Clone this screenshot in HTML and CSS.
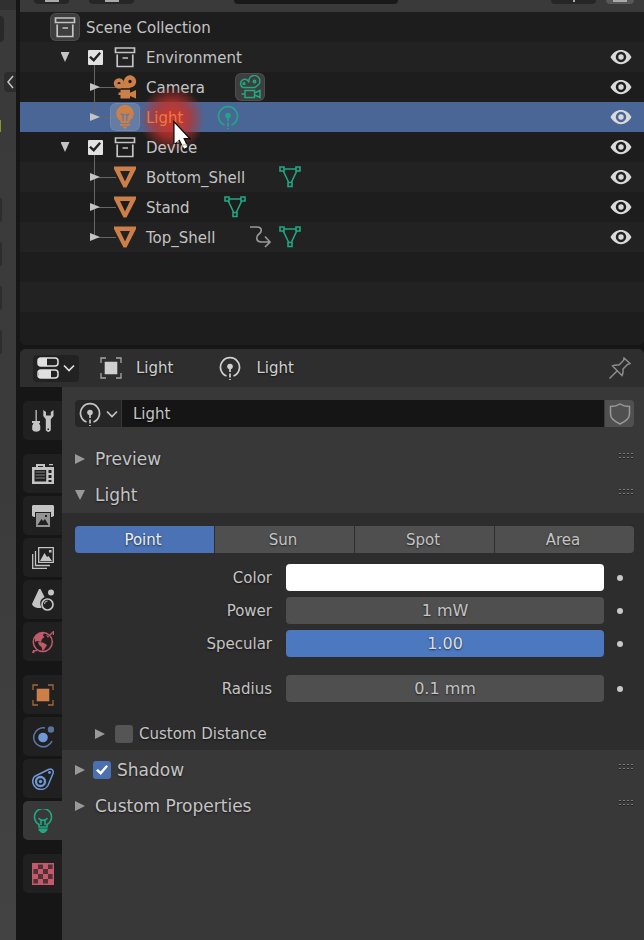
FILE: index.html
```html
<!DOCTYPE html>
<html lang="en">
<head>
<meta charset="utf-8">
<title>Outliner and Light Properties</title>
<link rel="stylesheet" href="styles.css">
</head>
<body>
<svg class="defs" aria-hidden="true">
  <symbol id="archive" viewBox="0 0 22 22"><path d="M1.500 2h19v4.500h-19zM3.200 8.500v12h15.600v-12M8.500 12h5.500" fill="none" stroke="currentColor" stroke-width="1.700"/></symbol>
  <symbol id="eye" viewBox="0 0 22 22"><path fill="currentColor" fill-rule="evenodd" d="M.5 11C5.500 1.500 16.500 1.500 21.500 11 16.500 20.500 5.500 20.500.5 11zM11 5.800a5.200 5.200 0 1 0 .01 0z"/><circle cx="11" cy="11" r="2.700" fill="currentColor"/></symbol>
  <symbol id="camera" viewBox="0 0 24 24"><path fill="currentColor" d="M5 9h12v4.200H5z"/><path fill="currentColor" fill-rule="evenodd" d="M6 3.200a5.200 5.200 0 1 0 .01 0zM6 7a1.500 1.500 0 1 1-.01 0zM17 .3a6.200 6.200 0 1 0 .01 0zM17 4.800a1.700 1.700 0 1 1-.01 0z"/><path fill="currentColor" d="M7.500 14.800H17v3l6-2.800v8.500L17 21v2.500H7.500V20h-2v-2.500h2z"/></symbol>
  <symbol id="camera-data" viewBox="0 0 24 24"><g fill="none" stroke="currentColor" stroke-width="1.500"><path d="M5 12.500A4.300 4.300 0 1 1 11 7.500 M11 7A5.500 5.500 0 1 1 19.500 10.500 L17 12.500H5M7 15.500h9.500v7H7zM16.500 18l5.500-2.500v7L16.500 20M7 19H3.500"/><circle cx="16.500" cy="6.500" r="1.200"/><circle cx="6" cy="8.700" r=".9"/></g></symbol>
  <symbol id="lamp" viewBox="0 0 24 24"><path fill="currentColor" fill-rule="evenodd" d="M7.500 18v-2A8.700 8.700 0 1 1 16.500 16v2zM7 8l2.500 4v4H11v-4.500l-1-1.500 2 .8 2-.8-1 1.500V16h1.500v-4L17 8l-5 1.500z"/><path fill="currentColor" d="M7 19h10v1.700H7zM9 21.500h6L12 24z"/></symbol>
  <symbol id="lamp-data" viewBox="0 0 24 24"><path d="M8 18v-2.500A8.500 8.500 0 1 1 16 15.500V18zM7.500 9l2.500 2.500V16M16.500 9 14 11.500V16M9.500 10.500l2.500 1 2.500-1" fill="none" stroke="currentColor" stroke-width="1.600"/><path fill="currentColor" d="M7.500 19.500h9v1.700L13.500 24h-3l-3-2.800z"/></symbol>
  <symbol id="point" viewBox="0 0 22 24"><g fill="none" stroke="currentColor" stroke-width="1.700"><path d="M7.500 20A9.500 9.500 0 1 1 14.500 20"/><path d="M11 12v12" stroke-dasharray="4 1.500"/></g><circle cx="11" cy="10.500" r="2.800" fill="currentColor"/></symbol>
  <symbol id="mesh-obj" viewBox="0 0 22 22"><path fill="currentColor" fill-rule="evenodd" d="M0 .5h22V3l-9.500 18.500h-3L0 3zM6 5l5 10.500L16 5z"/></symbol>
  <symbol id="mesh" viewBox="0 0 22 22"><path d="M5.500 3h11M4.500 5.500l5 10.500M17.500 5.500l-5 10.500M1 1h4v4H1zM17 1h4v4h-4zM9 16.500h4v4H9z" fill="none" stroke="currentColor" stroke-width="1.600"/></symbol>
  <symbol id="modifier" viewBox="0 0 22 22"><path d="M1 1h7c5 0 5.500 4.500 2 7s-3 8 2 8h8M16 10.500l5 5.500-5 5" fill="none" stroke="currentColor" stroke-width="1.600"/></symbol>
  <symbol id="object" viewBox="0 0 22 22"><path d="M1 6V1h5M16 1h5v5M21 16v5h-5M6 21H1v-5" fill="none" stroke="currentColor" stroke-width="1.300" opacity=".75"/><path d="M4.700 4.700h12.600v12.600H4.700z" fill="currentColor"/></symbol>
  <symbol id="chevron" viewBox="0 0 12 8"><path d="M1 1.500 6 6.500l5-5" fill="none" stroke="currentColor" stroke-width="1.700"/></symbol>
  <symbol id="toggles" viewBox="0 0 22 22"><rect x="1" y="1" width="20" height="8" rx="3" fill="none" stroke="currentColor" stroke-width="1.500"/><path d="M3 1h7v8H3L1 7V3z" fill="currentColor"/><rect x="1" y="13" width="20" height="8" rx="3" fill="none" stroke="currentColor" stroke-width="1.500"/><path d="M2 13h12v8H2z" fill="currentColor"/></symbol>
  <symbol id="pin" viewBox="0 0 22 22"><path d="M.5 21.500 8 14M3.500 9C6 7.500 8.500 8 10 8l4.500-4.500L15 1l6 5.500-2.500 1L14 12c0 2 .5 4-1 6.500z" fill="none" stroke="currentColor" stroke-width="1.500"/></symbol>
  <symbol id="shield" viewBox="0 0 22 22"><path d="M11 1C8 3 5 3.500 1.500 3.500V11c0 4.500 4 7.500 9.500 10 5.500-2.500 9.500-5.500 9.500-10V3.500C17 3.500 14 3 11 1z" fill="none" stroke="currentColor" stroke-width="1.500"/></symbol>
  <symbol id="tools" viewBox="0 0 22 22"><path fill="currentColor" d="M3.500 0h1.300v11H8v2H7l1.300 3v3.500C7 22.500 1.500 22.500.2 19.500V16l1.300-3H0v-2h3.500z"/><path fill="currentColor" fill-rule="evenodd" d="M11.300 0v6l2.500 3.200v11q2.500 3.500 5 0v-11L21.500 6V0L18.800 2v3.500H14V2zM15.500 18.500h1.500v1.500h-1.500z"/></symbol>
  <symbol id="render" viewBox="0 0 22 22"><path fill="currentColor" fill-rule="evenodd" d="M0 4h4V1h9v3h9v17H0zM6 3v1h5V3zM2.500 7v11.500h11.700V7zM16.500 7v3h3V7zM16.500 12v3h3v-3zM16.500 17v2h3v-2z"/><path fill="currentColor" opacity=".6" d="M3.500 8.500h9.500v1H3.500zM3.500 11.500h9.500v1H3.500zM3.500 14.500h9.500v1H3.500z"/><path fill="currentColor" d="M17 1h4v1.300h-4z"/></symbol>
  <symbol id="output" viewBox="0 0 22 22"><path fill="currentColor" d="M1 0h20l1 1v10l-2 1h-1V7H3v5H2l-2-1V1z"/><path fill="currentColor" fill-rule="evenodd" opacity=".7" d="M4 8h14v14H4zM5.500 20h11L13 14l-2 2-1.500-2zM13 10v2h2v-2z"/></symbol>
  <symbol id="layers" viewBox="0 0 22 22"><path fill="none" stroke="currentColor" stroke-width="1.300" d="M6.700.7h14.600v14.600H6.700zM3.500 4v14.500H18M.7 7v14.300H15"/><path fill="currentColor" d="m8 14 4.500-8 2.500 4 1.500-1 3.500 5zM17 3h2.500v2.500H17z"/></symbol>
  <symbol id="scene" viewBox="0 0 22 22"><path fill="currentColor" d="M7 0h1.500l4 8c-5 3-5 6-3 11C6 19.500 1 18.500 0 15z"/><circle cx="19" cy="3.500" r="3" fill="currentColor"/><circle cx="15.500" cy="15.500" r="5.500" fill="none" stroke="currentColor" stroke-width="1.700"/><path d="M12.500 15a3 3 0 0 1 3-3" fill="none" stroke="currentColor"/></symbol>
  <symbol id="world" viewBox="0 0 22 22"><circle cx="10.800" cy="11" r="9.500" fill="none" stroke="currentColor" stroke-width="1.500"/><path fill="currentColor" d="M3 6c2-4 6-5 9-4l-1 2.500 1.500 1.500L10 8l-1 3-4-1-2 1zM6 11l5 .5 4 2.500-2.500 4-2 2-1-4L7 14zM14 4l3 1-1 2zM1 19h4v1.300H2.500V22H0z"/><path d="M18 4l3.500-3.500V4" fill="none" stroke="currentColor" stroke-width="1.300"/></symbol>
  <symbol id="physics" viewBox="0 0 22 22"><path d="M13 2A9.500 9.500 0 1 0 20 15" fill="none" stroke="currentColor" stroke-width="1.500" opacity=".75"/><circle cx="11" cy="11.500" r="4.800" fill="currentColor"/><circle cx="19" cy="3.500" r="3.200" fill="currentColor" opacity=".7"/></symbol>
  <symbol id="constraint" viewBox="0 0 22 22"><path d="m2.500 8.500 14-7c3-1.500 5.500 1 4.500 4l-5 12c-3 5.500-11 5-14 0C.3 14.500.5 11 2.500 8.500z" fill="none" stroke="currentColor" stroke-width="1.500"/><circle cx="8.500" cy="13.500" r="4.500" fill="none" stroke="currentColor" stroke-width="2.300"/><circle cx="8.500" cy="13.500" r="1.700" fill="currentColor"/><circle cx="17.500" cy="4.500" r="1.400" fill="currentColor"/></symbol>
  <symbol id="checker" viewBox="0 0 22 22"><path d="M.7.700h20.600v20.600H.7z" fill="currentColor" fill-opacity=".3" stroke="currentColor" stroke-width="1.400"/><path fill="currentColor" d="M1 1h5v5H1zM11 1h5v5h-5zM6 6h5v5H6zM16 6h5v5h-5zM1 11h5v5H1zM11 11h5v5h-5zM6 16h5v5H6zM16 16h5v5h-5z"/></symbol>
</svg>

<div class="app">
  <aside class="viewport">
    <span class="gizmo-edge"></span>
    <button class="sidebar-toggle" aria-label="Toggle sidebar"><svg viewBox="0 0 8 14"><path d="M7 1 2 7l5 6" fill="none" stroke="currentColor" stroke-width="1.500"/></svg></button>
    <span class="axis"></span>
    <span class="nav"></span><span class="nav"></span><span class="nav"></span><span class="nav"></span>
  </aside>

  <main class="editors">
    <section class="outliner">
      <header class="outliner-head">
        <button class="stub wide" aria-label="Editor type"><i></i></button>
        <button class="stub mode" aria-label="Display mode"><i></i></button>
        <input class="search" type="search" aria-label="Search">
        <button class="stub filter" aria-label="Filter"><i></i></button>
        <button class="stub add" aria-label="New collection"><i></i></button>
      </header>
      <div class="tree">
        <div class="row root"><span class="cell boxed"><svg class="i22"><use href="#archive"/></svg></span><span class="name">Scene Collection</span></div>
        <div class="row coll"><button class="cell tri open" aria-label="Collapse"></button><span class="cell stem"><input type="checkbox" class="tick light" aria-label="Environment enabled" checked></span><span class="cell"><svg class="i22"><use href="#archive"/></svg></span><span class="name">Environment</span><button class="cell eye" aria-label="Hide Environment"><svg class="i22"><use href="#eye"/></svg></button></div>
        <div class="row obj"><button class="cell tri branch" aria-label="Expand"></button><span class="cell orange"><svg class="i24"><use href="#camera"/></svg></span><span class="name">Camera</span><span class="cell data boxed"><svg class="i24"><use href="#camera-data"/></svg></span><button class="cell eye" aria-label="Hide Camera"><svg class="i22"><use href="#eye"/></svg></button></div>
        <div class="row obj selected"><button class="cell tri branch last" aria-label="Expand"></button><span class="cell orange boxed"><svg class="i24"><use href="#lamp"/></svg></span><span class="name">Light<span class="glow"></span><svg class="cursor" viewBox="0 0 20 34"><path d="M1 1v26l6-5 5 10 5-2.500L12.500 20H19z" fill="#fff" stroke="#111" stroke-width="1.500"/></svg></span><span class="cell data"><svg class="i24"><use href="#point"/></svg></span><button class="cell eye" aria-label="Hide Light"><svg class="i22"><use href="#eye"/></svg></button></div>
        <div class="row coll"><button class="cell tri open" aria-label="Collapse"></button><span class="cell stem"><input type="checkbox" class="tick light" aria-label="Device enabled" checked></span><span class="cell"><svg class="i22"><use href="#archive"/></svg></span><span class="name">Device</span><button class="cell eye" aria-label="Hide Device"><svg class="i22"><use href="#eye"/></svg></button></div>
        <div class="row obj"><button class="cell tri branch" aria-label="Expand"></button><span class="cell orange"><svg class="i22"><use href="#mesh-obj"/></svg></span><span class="name">Bottom_Shell</span><span class="cell data"><svg class="i22"><use href="#mesh"/></svg></span><button class="cell eye" aria-label="Hide Bottom_Shell"><svg class="i22"><use href="#eye"/></svg></button></div>
        <div class="row obj"><button class="cell tri branch" aria-label="Expand"></button><span class="cell orange"><svg class="i22"><use href="#mesh-obj"/></svg></span><span class="name">Stand</span><span class="cell data"><svg class="i22"><use href="#mesh"/></svg></span><button class="cell eye" aria-label="Hide Stand"><svg class="i22"><use href="#eye"/></svg></button></div>
        <div class="row obj"><button class="cell tri branch last" aria-label="Expand"></button><span class="cell orange"><svg class="i22"><use href="#mesh-obj"/></svg></span><span class="name">Top_Shell</span><span class="cell data grey"><svg class="i22"><use href="#modifier"/></svg></span><span class="cell green"><svg class="i22"><use href="#mesh"/></svg></span><button class="cell eye" aria-label="Hide Top_Shell"><svg class="i22"><use href="#eye"/></svg></button></div>
        <div class="row"></div>
        <div class="row"></div>
        <div class="row"></div>
      </div>
    </section>

    <section class="properties">
      <header class="props-head">
        <button class="editor-type" aria-label="Editor type"><svg class="i22"><use href="#toggles"/></svg><svg class="chev"><use href="#chevron"/></svg></button>
        <span class="crumb"><svg class="i22"><use href="#object"/></svg>Light</span>
        <span class="crumb"><svg class="i24"><use href="#point"/></svg>Light</span>
        <button class="pin" aria-label="Pin"><svg class="i22"><use href="#pin"/></svg></button>
      </header>
      <div class="props-body">
        <nav class="tabs">
          <button class="tab" aria-label="Tool"><svg class="i22"><use href="#tools"/></svg></button>
          <button class="tab first" aria-label="Render"><svg class="i22"><use href="#render"/></svg></button>
          <button class="tab" aria-label="Output"><svg class="i22"><use href="#output"/></svg></button>
          <button class="tab" aria-label="View Layer"><svg class="i22"><use href="#layers"/></svg></button>
          <button class="tab" aria-label="Scene"><svg class="i22"><use href="#scene"/></svg></button>
          <button class="tab red" aria-label="World"><svg class="i22"><use href="#world"/></svg></button>
          <button class="tab first orange" aria-label="Object"><svg class="i22"><use href="#object"/></svg></button>
          <button class="tab blue" aria-label="Physics"><svg class="i22"><use href="#physics"/></svg></button>
          <button class="tab blue" aria-label="Constraints"><svg class="i22"><use href="#constraint"/></svg></button>
          <button class="tab green active" aria-label="Object Data"><svg class="i24"><use href="#lamp-data"/></svg></button>
          <button class="tab first red" aria-label="Texture"><svg class="i22"><use href="#checker"/></svg></button>
        </nav>
        <div class="panels">
          <div class="datablock">
            <button class="browse" aria-label="Browse light data"><svg class="i24"><use href="#point"/></svg><svg class="chev"><use href="#chevron"/></svg></button>
            <input class="id" type="text" aria-label="Name" value="Light">
            <button class="fake" aria-label="Fake user"><svg class="i22"><use href="#shield"/></svg></button>
          </div>
          <div class="panel-head"><button class="fold" aria-label="Expand Preview"></button><h2>Preview</h2><span class="grip"></span></div>
          <div class="panel-head"><button class="fold open" aria-label="Collapse Light"></button><h2>Light</h2><span class="grip"></span></div>
          <div class="panel-body">
            <div class="types">
              <button class="on" aria-pressed="true">Point</button><button>Sun</button><button>Spot</button><button>Area</button>
            </div>
            <div class="field"><label for="color">Color</label><button id="color" class="swatch"></button><span class="dot"></span></div>
            <div class="field"><label for="power">Power</label><input id="power" type="text" value="1 mW"><span class="dot"></span></div>
            <div class="field"><label for="specular">Specular</label><input id="specular" class="full" type="text" value="1.00"><span class="dot"></span></div>
            <div class="field apart"><label for="radius">Radius</label><input id="radius" type="text" value="0.1 mm"><span class="dot"></span></div>
            <div class="subpanel"><button class="fold" aria-label="Expand Custom Distance"></button><input type="checkbox" class="tick grey" id="cd"><label for="cd">Custom Distance</label></div>
          </div>
          <div class="panel-head"><button class="fold" aria-label="Expand Shadow"></button><input type="checkbox" class="tick blue" id="shadow" checked><h2><label for="shadow">Shadow</label></h2><span class="grip"></span></div>
          <div class="panel-head"><button class="fold" aria-label="Expand Custom Properties"></button><h2>Custom Properties</h2><span class="grip"></span></div>
        </div>
      </div>
    </section>
  </main>
</div>
</body>
</html>
```
FILE: styles.css
```css
* { box-sizing: border-box; }
body {
  margin: 0;
  background: #161616;
  color: #c4c4c4;
  font: 15px/20px "DejaVu Sans", sans-serif;
}
button, input { font: inherit; color: inherit; border: 0; margin: 0; padding: 0; background: none; min-width: 0; text-shadow: inherit; }
svg { display: block; flex: none; }
.defs { position: absolute; width: 0; height: 0; }
.i22 { width: 22px; height: 22px; }
.i24 { width: 24px; height: 24px; }
.chev { width: 12px; height: 8px; }
.orange { color: #cc7f48; }
.green { color: #1fa882; }
.red { color: #c25a6b; }
.blue { color: #6f98d6; }

.app { display: flex; min-height: 100vh; overflow: hidden; }
.editors { flex: 1; min-width: 0; display: flex; flex-direction: column; gap: 4px; }

/* Sliver of the 3D viewport */
.viewport {
  width: 16px;
  margin-right: 4px;
  padding-top: 16px;
  overflow: hidden;
  background: linear-gradient(#303030 10px, #3a3a3a 10px, #3b3b3b 50%, #434343);
}
.viewport span { display: block; }
.gizmo-edge { width: 4px; height: 26px; background: #292929; border-radius: 0 4px 4px 0; }
.sidebar-toggle { display: grid; place-items: center; width: 12px; height: 20px; margin: 30px 0 28px 4px; background: #2c2c2c; border-radius: 4px 0 0 4px; }
.sidebar-toggle svg { width: 8px; height: 14px; }
.axis { width: 1px; height: 12px; background: #7f9a25; margin-bottom: 66px; }
.nav { width: 2px; height: 24px; margin-bottom: 20px; background: #2d2d2d; border-radius: 0 8px 8px 0; }

/* Outliner */
.outliner { background: #1d1d1d; border-radius: 0 0 6px 6px; padding-bottom: 3px; }
.outliner-head { display: flex; height: 12px; padding: 0 10px 0 14px; background: #3a3a3a; align-items: flex-start; }
.stub { display: flex; justify-content: center; height: 4px; background: #262626; border-radius: 0 0 4px 4px; }
.stub i { width: 14px; height: 2px; background: #aaa; }
.wide { width: 35px; }
.mode { width: 45px; margin-left: 20px; }
.search { flex: 0 1 164px; height: 4px; margin: 0 auto 0 100px; background: #191919; border-radius: 0 0 4px 4px; }
.filter { width: 45px; }
.filter i { width: 2px; }
.add { width: 28px; margin-left: 10px; background: #585858; }
.row { display: flex; align-items: center; height: 30px; background: #1d1d1d; }
.row:nth-child(even) { background: #222; }
.row.root { padding-left: 30px; }
.row.coll { padding-left: 30px; }
.row.obj { padding-left: 60px; }
.row.selected { background: #4a6696; }
.cell { position: relative; display: grid; place-items: center; flex: none; width: 30px; height: 28px; }
.boxed { background: rgba(255, 255, 255, .15); border: 1px solid rgba(255, 255, 255, .08); border-radius: 6px; }
.name { position: relative; margin-left: 6px; padding-top: 2px; z-index: 2; }
.selected .name { color: #e97b44; }
.data { margin-left: 30px; color: #1fa882; }
.data.grey { color: #999; }
.eye { margin: 0 8px 0 auto; color: #dadada; }

.tri::after { content: ""; width: 10px; height: 8px; background: #c4c4c4; clip-path: polygon(0 0, 100% 50%, 0 100%); }
.tri.open::after { width: 9px; height: 10px; clip-path: polygon(0 0, 100% 0, 50% 100%); }
.branch::after { position: relative; }
.branch::before { content: ""; position: absolute; left: 14px; top: -2px; width: 22px; height: 32px; background: linear-gradient(#666, #666) 0 0 / 1px 100% no-repeat, linear-gradient(#666, #666) 0 50% / 100% 1px no-repeat; }
.branch.last::before { background-size: 1px 50%, 100% 1px; }
.stem::before { content: ""; position: absolute; left: 14px; top: 14px; width: 1px; height: 16px; background: #666; }

.tick { position: relative; appearance: none; display: grid; place-items: center; flex: none; width: 18px; height: 18px; border-radius: 3px; }
.tick.light { width: 15px; height: 15px; border-radius: 1px; background: #e2e2e2; color: #222; }
.tick.grey { background: #555; }
.tick.blue { background: #4a70b0; color: #fff; }
.tick:checked::before { content: ""; width: 12px; height: 10px; background: currentColor; clip-path: polygon(0 55%, 16% 40%, 38% 66%, 86% 0, 100% 14%, 40% 100%); }

.glow { position: absolute; z-index: -1; left: -7px; top: -20px; width: 66px; height: 66px; border-radius: 50%; background: radial-gradient(closest-side, rgba(203, 52, 42, .95) 20%, rgba(190, 50, 44, .75) 55%, rgba(180, 50, 44, 0)); }
.cursor { position: absolute; left: 27px; top: 14px; width: 18px; height: 32px; }

/* Properties editor */
.properties { flex: 1; display: flex; flex-direction: column; background: #383838; border-radius: 6px 6px 0 0; overflow: hidden; text-shadow: 0 1px 2px rgba(0, 0, 0, .6); }
.props-head { display: flex; align-items: center; height: 38px; padding: 0 13px; background: #2e2e2e; }
.editor-type { display: flex; align-items: center; justify-content: center; gap: 4px; width: 46px; height: 27px; margin-right: 21px; background: #222; border-radius: 4px; color: #e0e0e0; }
.crumb { display: flex; align-items: center; gap: 14px; margin-right: 45px; color: #d0d0d0; }
.pin { margin-left: auto; color: #8c8c8c; }
.props-body { flex: 1; display: flex; }
.tabs { display: flex; flex-direction: column; gap: 3px; width: 42px; padding: 14px 0 0 3px; background: #161616; }
.tab { display: grid; place-items: center; height: 39px; background: #202020; border-radius: 5px 0 0 5px; }
.tab.first { margin-top: 11px; }
.tab.active { background: #383838; }
.panels { flex: 1; min-width: 0; }

.datablock { display: flex; gap: 1px; height: 27px; margin: 13px 10px 14px 13px; }
.browse { display: flex; align-items: center; justify-content: center; gap: 4px; width: 46px; background: #262626; border-radius: 4px 0 0 4px; }
.id { flex: 1; padding: 0 11px; background: #151515; }
.fake { display: grid; place-items: center; width: 29px; background: #505050; border-radius: 0 4px 4px 0; color: #999; }

.panel-head { display: flex; align-items: center; height: 36px; padding: 0 9px 0 13px; }
.panel-head h2 { margin: 0; font-size: 17px; font-weight: 400; }
.fold { width: 10px; height: 10px; margin-right: 10px; flex: none; }
.fold::after { content: ""; display: block; width: 10px; height: 10px; background: #999; clip-path: polygon(0 0, 100% 50%, 0 100%); }
.fold.open::after { clip-path: polygon(0 0, 100% 0, 50% 100%); }
.grip { width: 16px; height: 8px; margin: 0 0 4px auto; background: linear-gradient(90deg, transparent 2px, #383838 2px) 0 0 / 4px 4px, linear-gradient(#7c7c7c 1px, #202020 1px, #202020 2px, transparent 2px) 0 0 / 4px 4px; }
.panel-head .tick { margin: 0 6px 0 -2px; }

.panel-body { padding: 13px 10px 1px 13px; background: #2d2d2d; }
.panel-body + .panel-head { margin-top: 2px; }
.types { display: grid; grid-template-columns: repeat(4, 1fr); gap: 1px; margin-bottom: 11px; }
.types button { height: 27px; padding-right: 3px; background: #4f4f4f; }
.types button:first-child { border-radius: 4px 0 0 4px; }
.types button:last-child { border-radius: 0 4px 4px 0; }
.types .on { background: #4a72b4; color: #eee; }
.field { display: grid; grid-template-columns: 211fr 318fr 30fr; align-items: center; height: 27px; margin-bottom: 6px; }
.field label { padding-right: 14px; text-align: right; }
.field input, .swatch { width: 100%; height: 27px; background: #4f4f4f; border-radius: 4px; font-size: 16px; text-align: center; }
.field .swatch { background: #fff; }
.field .full { background: #4c78bf; color: #dcdcdc; }
.field.apart { margin-top: 18px; }
.dot { width: 6px; height: 6px; margin-left: 13px; border-radius: 50%; background: #c8c8c8; }
.subpanel { display: flex; align-items: center; height: 30px; margin-top: 17px; padding-left: 20px; }
.subpanel .tick { margin-right: 6px; }
```
